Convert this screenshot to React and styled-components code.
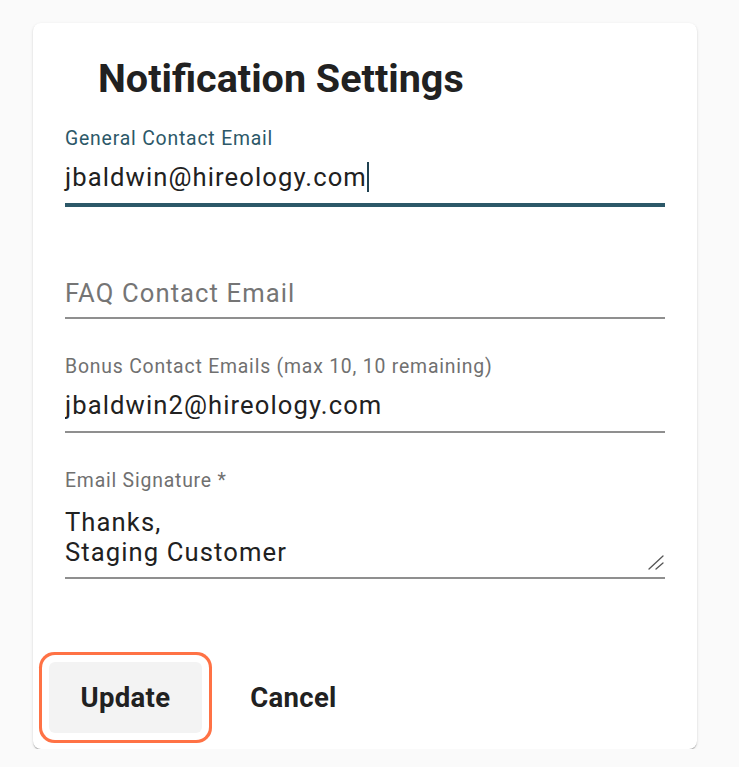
import React from "react";
import styled, { createGlobalStyle } from "styled-components";

const GlobalStyle = createGlobalStyle`
  body {
    margin: 0;
    background: #fafafa;
    font-family: Roboto, "Liberation Sans", sans-serif;
    color: #212121;
  }
`;

const Card = styled.div`
  margin: 23px 0 0 33px;
  width: 664px;
  box-sizing: border-box;
  padding: 32px 16px 16px;
  background: #fff;
  border-radius: 8px;
  box-shadow: 0px 2px 1px -1px rgba(0, 0, 0, 0.2),
    0px 1px 1px 0px rgba(0, 0, 0, 0.14), 0px 1px 3px 0px rgba(0, 0, 0, 0.12);
`;

const Title = styled.h2`
  margin: 0;
  padding-left: 49px;
  font-size: 39.5px;
  line-height: 48px;
  font-weight: 700;
  color: #212121;
`;

const Fields = styled.div`
  display: flex;
  flex-direction: column;
  gap: 36px;
  margin-top: 24px;
  padding: 0 16px;
`;

const Field = styled.div`
  display: flex;
  flex-direction: column;
`;

const Label = styled.label`
  font-size: 19.4px;
  line-height: 24px;
  letter-spacing: 0.8px;
  color: ${(p) => (p.$focused ? "#2c5868" : "#707070")};
`;

const InputBox = styled.div`
  padding: ${(p) => (p.$empty ? "34px 0 6px" : "8px 0 8px")};
  border-bottom: 2px solid ${(p) => (p.$focused ? "#2c5868" : "#8f8f8f")};
  box-shadow: ${(p) => (p.$focused ? "0 2px 0 #2c5868" : "none")};
`;

const Value = styled.div`
  font-size: 25.6px;
  line-height: 36px;
  height: 36px;
  letter-spacing: 1.1px;
  color: #212121;
  white-space: nowrap;
`;

const Caret = styled.span`
  display: inline-block;
  width: 2px;
  height: 30px;
  vertical-align: -6px;
  background: #1f4150;
`;

const TextInput = styled.input`
  display: block;
  width: 100%;
  box-sizing: border-box;
  border: none;
  outline: none;
  padding: 0;
  margin: 0;
  background: transparent;
  font-family: inherit;
  font-size: 25.6px;
  line-height: 36px;
  height: 36px;
  letter-spacing: 1.1px;
  color: #212121;

  &::placeholder {
    color: #757575;
    opacity: 1;
  }
`;

const TextBox = styled.div`
  position: relative;
  padding: 6px 0 6px;
  border-bottom: 2px solid #8f8f8f;
`;

const TextArea = styled.textarea`
  display: block;
  width: 100%;
  box-sizing: border-box;
  border: none;
  outline: none;
  margin: 0;
  padding: 8px 0 4px;
  background: transparent;
  font-family: inherit;
  font-size: 25.6px;
  line-height: 30px;
  height: 72px;
  letter-spacing: 1.1px;
  color: #212121;
  resize: none;
`;

const Resizer = styled.svg`
  position: absolute;
  right: 1px;
  bottom: 7px;
  width: 16px;
  height: 15px;
`;

const Actions = styled.div`
  display: flex;
  gap: 15px;
  margin-top: 83px;
`;

const Button = styled.button`
  width: 153px;
  height: 71px;
  border: none;
  border-radius: 6px;
  background: ${(p) => (p.$primary ? "#f3f3f3" : "transparent")};
  box-shadow: ${(p) =>
    p.$primary ? "0 0 0 7px #fff, 0 0 0 10px #ff7245" : "none"};
  font-family: inherit;
  font-size: 27.5px;
  font-weight: 700;
  letter-spacing: 0.3px;
  color: #212121;
  cursor: pointer;
`;

export default function App() {
  return (
    <>
      <GlobalStyle />
      <Card>
        <Title>Notification Settings</Title>
        <Fields>
          <Field>
            <Label $focused>General Contact Email</Label>
            <InputBox $focused>
              <Value>
                jbaldwin@hireology.com
                <Caret />
              </Value>
            </InputBox>
          </Field>
          <Field>
            <InputBox $empty>
              <TextInput placeholder="FAQ Contact Email" readOnly />
            </InputBox>
          </Field>
          <Field>
            <Label>Bonus Contact Emails (max 10, 10 remaining)</Label>
            <InputBox>
              <TextInput defaultValue="jbaldwin2@hireology.com" readOnly />
            </InputBox>
          </Field>
          <Field>
            <Label>Email Signature *</Label>
            <TextBox>
              <TextArea
                defaultValue={"Thanks,\nStaging Customer"}
                readOnly
              />
              <Resizer viewBox="0 0 16 15">
                <path
                  d="M15 1 L1 14 M15 8 L8 14"
                  stroke="#555"
                  strokeWidth="1.3"
                  strokeLinecap="round"
                  fill="none"
                />
              </Resizer>
            </TextBox>
          </Field>
        </Fields>
        <Actions>
          <Button $primary>Update</Button>
          <Button>Cancel</Button>
        </Actions>
      </Card>
    </>
  );
}
